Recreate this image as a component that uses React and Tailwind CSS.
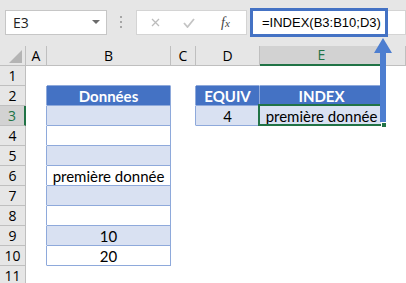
import React from 'react'

const cols = [
  { key: 'A', w: 'w-[21px]' },
  { key: 'B', w: 'w-[124px]' },
  { key: 'C', w: 'w-[25px]' },
  { key: 'D', w: 'w-[64px]' },
  { key: 'E', w: 'w-[124px]' },
  { key: 'F', w: 'flex-1' },
]

// every cell gets one bg, one right-border colour and one bottom-border colour
const BLANK = 'bg-white border-r-white border-b-white'
const HEAD = 'bg-[#4472c4] text-white font-bold border-r-[#8ea9db] border-b-[#8ea9db]'
const BAND = 'bg-[#d9e1f2] border-r-[#8ea9db] border-b-[#8ea9db]'
const PLAIN = 'bg-white border-r-[#8ea9db] border-b-[#8ea9db]'
const EDGE_R = 'bg-white border-r-[#8ea9db] border-b-white'
const EDGE_B = 'bg-white border-r-white border-b-[#8ea9db]'

const cells = {
  '1B': { cls: EDGE_B },
  '1D': { cls: EDGE_B },
  '1E': { cls: EDGE_B },
  '2A': { cls: EDGE_R },
  '2B': { cls: HEAD, text: 'Données' },
  '2C': { cls: EDGE_R },
  '2D': { cls: HEAD, text: 'EQUIV' },
  '2E': { cls: HEAD, text: 'INDEX' },
  '3A': { cls: EDGE_R },
  '3B': { cls: BAND },
  '3C': { cls: EDGE_R },
  '3D': { cls: BAND, text: '4' },
  '3E': { cls: BAND, text: 'première donnée' },
  '4A': { cls: EDGE_R },
  '4B': { cls: PLAIN },
  '5A': { cls: EDGE_R },
  '5B': { cls: BAND },
  '6A': { cls: EDGE_R },
  '6B': { cls: PLAIN, text: 'première donnée' },
  '7A': { cls: EDGE_R },
  '7B': { cls: BAND },
  '8A': { cls: EDGE_R },
  '8B': { cls: PLAIN },
  '9A': { cls: EDGE_R },
  '9B': { cls: BAND, text: '10' },
  '10A': { cls: EDGE_R },
  '10B': { cls: PLAIN, text: '20' },
}

const rows = [1, 2, 3, 4, 5, 6, 7, 8, 9, 10, 11]

const App = () => {
  return (
    <div className="relative w-[406px] h-[283px] overflow-hidden bg-[#e6e6e6] font-['Lato',sans-serif] text-black">
      {/* formula bar */}
      <div className="h-[46px] flex items-start pt-[10px]">
        <div className="ml-[5px] w-[102px] h-[25px] bg-white border border-[#c6c6c6] flex items-center justify-between pl-[7px] pr-[6px]">
          <span className="font-['Open_Sans',sans-serif] text-[14px] text-[#222]">E3</span>
          <svg width="8" height="5" viewBox="0 0 8 5"><path d="M0 0h8L4 4z" fill="#6b6b6b" /></svg>
        </div>
        <div className="ml-[13px] mt-[6px] flex flex-col gap-[3px]">
          <span className="w-[2px] h-[2px] bg-[#a6a6a6]" />
          <span className="w-[2px] h-[2px] bg-[#a6a6a6]" />
          <span className="w-[2px] h-[2px] bg-[#a6a6a6]" />
        </div>
        <div className="ml-[14px] w-[111px] h-[25px] bg-white border border-[#d4d4d4] flex items-center">
          <svg className="ml-[14px]" width="9" height="9" viewBox="0 0 9 9">
            <path d="M1 1l7 7M8 1L1 8" stroke="#bcbcbc" strokeWidth="1.3" />
          </svg>
          <svg className="ml-[23px]" width="12" height="10" viewBox="0 0 12 10">
            <path d="M1 5l3.5 4L11 1" stroke="#c4c4c4" strokeWidth="1.8" fill="none" />
          </svg>
          <span className="ml-[26px] font-['Liberation_Serif',serif] italic text-[14px] text-[#444] leading-none">
            f<span className="text-[11px]">x</span>
          </span>
        </div>
        <div className="ml-[3px] flex-1 h-[25px] bg-white border border-[#d4d4d4]" />
      </div>

      {/* column headers */}
      <div className="flex h-[20px] font-['Open_Sans',sans-serif] text-[14px]">
        <div className="w-[26px] border-r border-b border-[#bfbfbf] relative">
          <svg className="absolute left-[9px] top-[4px]" width="13" height="13" viewBox="0 0 13 13">
            <path d="M13 0V13H0z" fill="#b4b4b4" />
          </svg>
        </div>
        {cols.map((c) =>
          c.key === 'E' ? (
            <div key={c.key} className={`${c.w} bg-[#d2d2d2] border-r border-r-[#bfbfbf] border-b-2 border-b-[#217346] flex items-center justify-center text-[#217346] leading-none`}>
              {c.key}
            </div>
          ) : (
            <div key={c.key} className={`${c.w} border-r border-b border-[#bfbfbf] flex items-center justify-center leading-none`}>
              {c.key === 'F' ? '' : c.key}
            </div>
          )
        )}
      </div>

      {/* sheet rows */}
      {rows.map((r) => (
        <div key={r} className="flex h-[20px]">
          {r === 3 ? (
            <div className="w-[26px] bg-[#d2d2d2] border-b border-b-[#bfbfbf] border-r-2 border-r-[#217346] flex items-center justify-center font-['Open_Sans',sans-serif] text-[14px] text-[#217346] leading-none">
              {r}
            </div>
          ) : (
            <div className="w-[26px] border-r border-b border-[#bfbfbf] flex items-center justify-center font-['Open_Sans',sans-serif] text-[14px] leading-none">
              {r}
            </div>
          )}
          {cols.map((c) => {
            const cell = cells[`${r}${c.key}`]
            return (
              <div
                key={c.key}
                className={`${c.w} border-r border-b flex items-center justify-center text-[15px] leading-none pt-[2px] ${cell ? cell.cls : BLANK}`}
              >
                {cell && cell.text}
              </div>
            )
          })}
        </div>
      ))}

      {/* formula highlight */}
      <div className="absolute left-[250px] top-[8px] w-[138px] h-[29px] border-[3px] border-[#4472c4] bg-white flex items-center pl-[9px] font-['Liberation_Sans',sans-serif] text-[13px] leading-none">
        =INDEX(B3:B10;D3)
      </div>

      {/* active cell */}
      <div className="absolute left-[258px] top-[104px] w-[126px] h-[22px] border-2 border-[#217346]" />
      <div className="absolute left-[381px] top-[122px] w-[6px] h-[6px] bg-[#217346] border border-white" />

      {/* arrow */}
      <svg className="absolute left-[373px] top-[37px]" width="20" height="86" viewBox="0 0 20 86">
        <path d="M10 1L19 16H13V85H7V16H1z" fill="#4d7ed0" />
      </svg>
    </div>
  )
}

export default App
